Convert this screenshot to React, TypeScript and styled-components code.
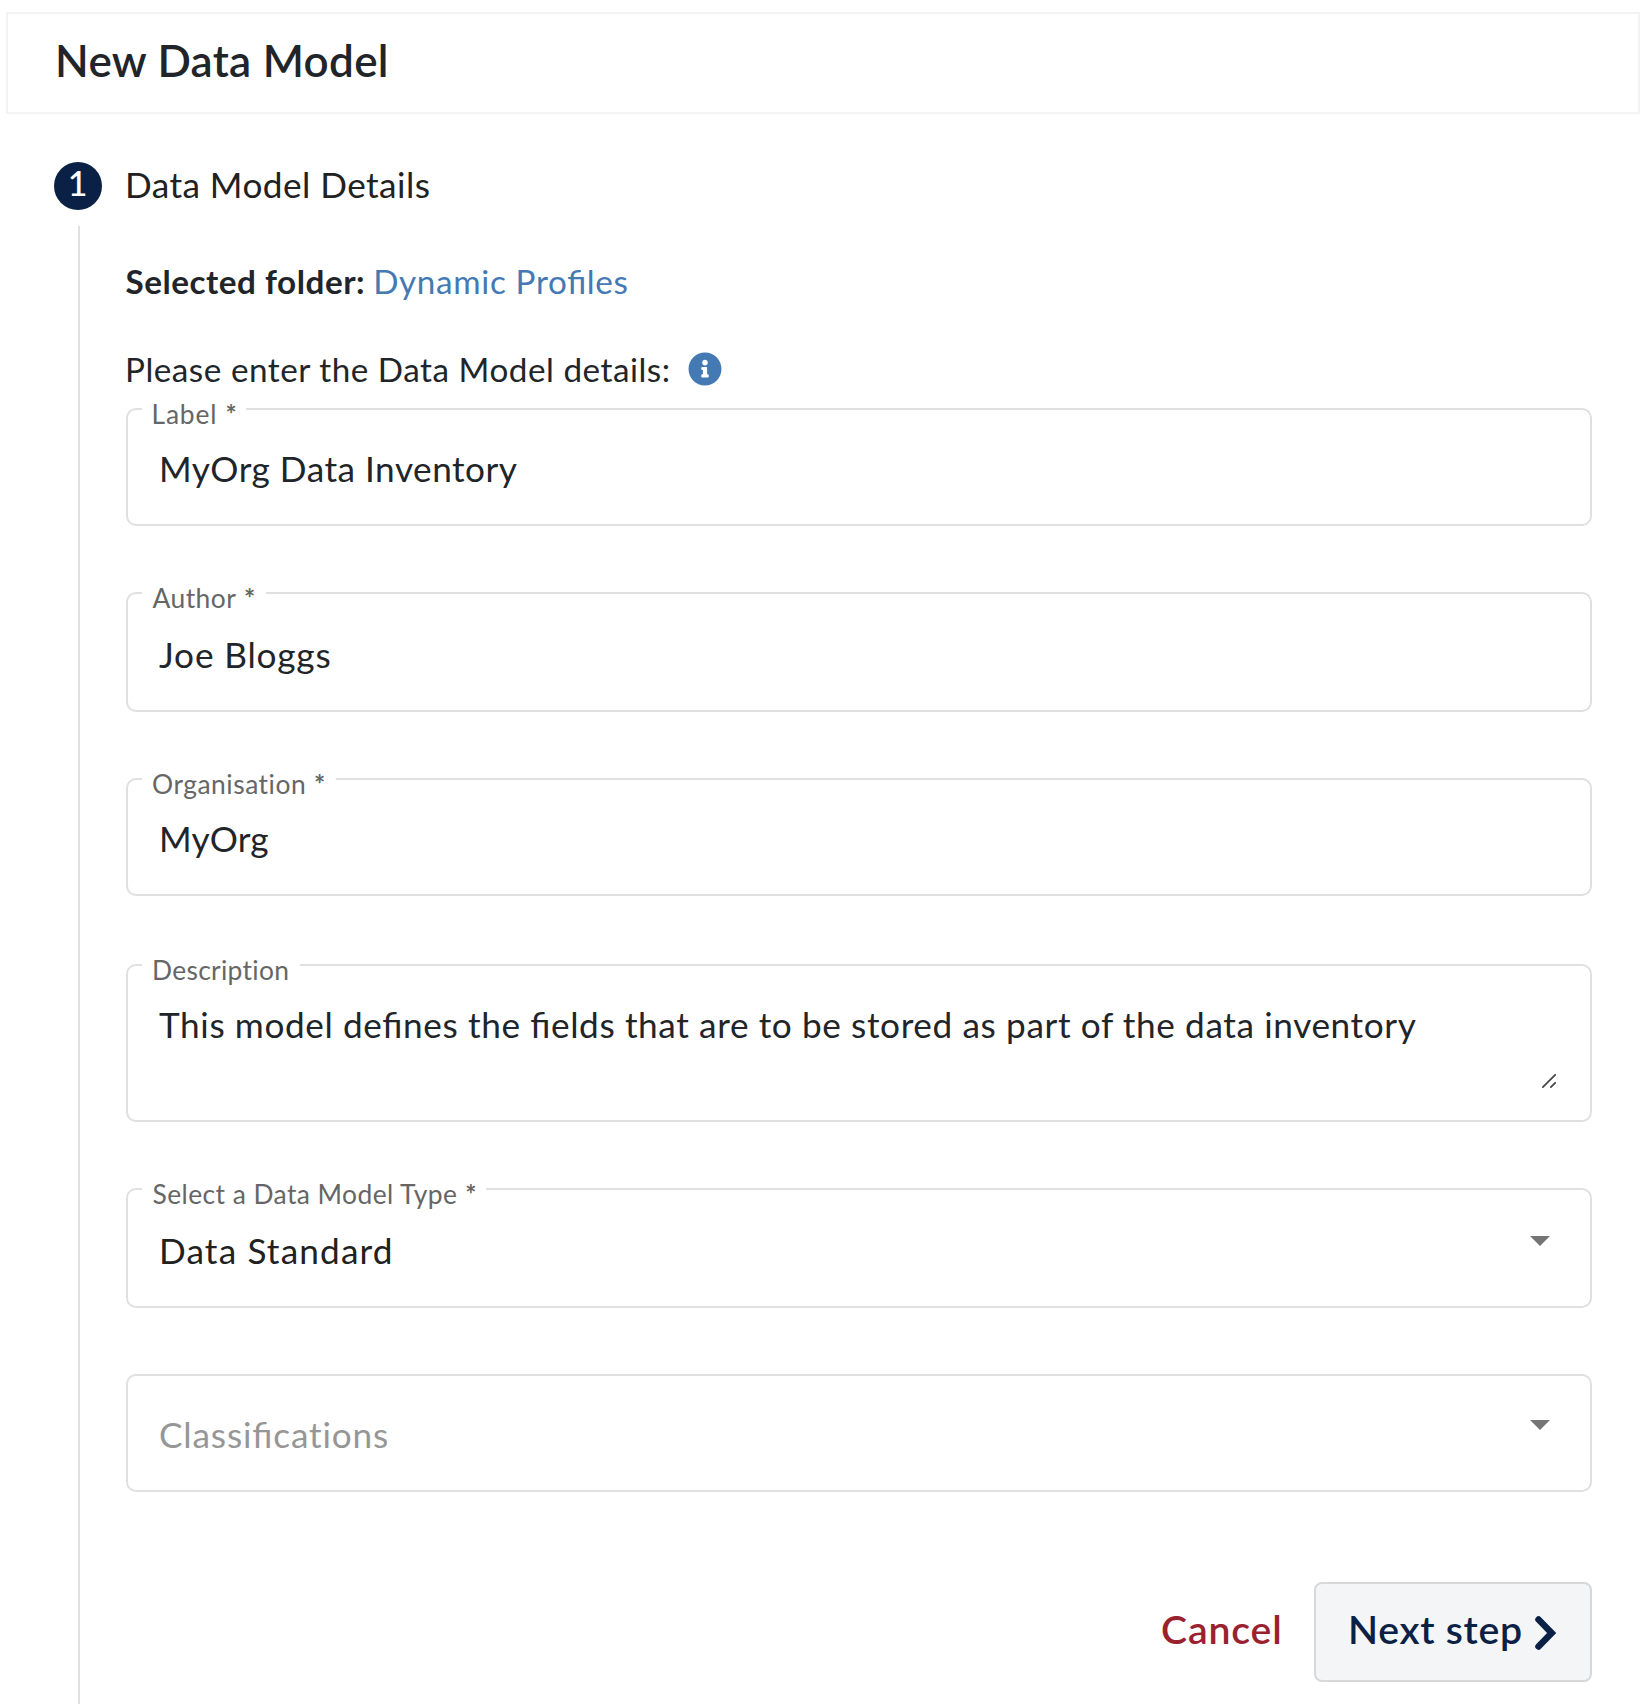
import React from "react";
import styled, { createGlobalStyle } from "styled-components";
import { FaInfoCircle } from "react-icons/fa";

const GlobalStyle = createGlobalStyle`
  * { box-sizing: border-box; }
  body {
    margin: 0;
    background: #fff;
    color: #212529;
    font-family: Lato, "Open Sans", sans-serif;
    font-feature-settings: "liga" 1;
  }
`;

const Page = styled.main`
  display: flex;
  flex-direction: column;
  height: 1704px;
  padding: 12px 8px 0 6px;
  overflow: hidden;
`;

const Header = styled.header`
  height: 102px;
  padding: 19px 0 0 47px;
  border: 2px solid #f3f3f3;
`;

const Title = styled.h1`
  margin: 0;
  font-size: 44px;
  font-weight: 600;
  line-height: 54px;
  letter-spacing: 0.3px;
`;

const StepHeader = styled.div`
  display: flex;
  gap: 23px;
  margin: 48px 0 0 48px;
  color: #212121;
`;

const StepNumber = styled.span`
  width: 48px;
  height: 48px;
  padding-right: 1px;
  border-radius: 50%;
  background: #0a2145;
  color: #fff;
  font-size: 34px;
  font-weight: 500;
  line-height: 41px;
  text-align: center;
`;

const StepTitle = styled.h2`
  margin: 0;
  font-size: 35.2px;
  font-weight: 400;
  line-height: 45px;
  letter-spacing: 0.44px;
`;

const StepBody = styled.section`
  flex: 1;
  margin: 16px 48px 0 72px;
  padding: 35px 0 0 46px;
  border-left: 2px solid #e0e0e0;
`;

const Line = styled.p<{ $gap: number; $top?: number }>`
  display: flex;
  gap: ${(p) => p.$gap}px;
  margin: ${(p) => p.$top ?? 0}px 0 0;
  font-size: 33.25px;
  line-height: 40px;
  letter-spacing: 0.52px;
`;

const Strong = styled.strong`
  margin-left: -0.5px;
  font-weight: 700;
`;

const FolderLink = styled.a`
  color: #4479b3;
  letter-spacing: 0.66px;
`;

const Prompt = styled.span`
  margin-left: -1px;
`;

const InfoIcon = styled(FaInfoCircle)`
  width: 34px;
  height: 34px;
  margin-top: 3px;
  color: #4479b3;
`;

const Form = styled.form`
  display: flex;
  flex-direction: column;
  gap: 66px;
  margin-top: 19px;
`;

const FieldBox = styled.div<{ $height: number; $pad: number; $extra?: number }>`
  position: relative;
  display: flex;
  justify-content: space-between;
  height: ${(p) => p.$height}px;
  margin-top: ${(p) => p.$extra ?? 0}px;
  padding: ${(p) => p.$pad}px 0 0 31px;
  border: 2px solid #e0e0e0;
  border-radius: 10px;
`;

const Label = styled.label<{ $width: number; $spacing: number; $inset: number }>`
  position: absolute;
  top: -12.5px;
  left: 14px;
  width: ${(p) => p.$width}px;
  padding-left: ${(p) => p.$inset}px;
  background: #fff;
  color: #666;
  font-size: 26.4px;
  line-height: 32px;
  letter-spacing: ${(p) => p.$spacing}px;
  font-feature-settings: "liga" 0;
  white-space: nowrap;
`;

const Required = styled.span`
  margin-left: 1px;
  font-weight: 700;
`;

const Value = styled.span<{ $spacing: number; $tone?: string }>`
  color: ${(p) => p.$tone ?? "#212529"};
  font-size: 35.2px;
  line-height: 46px;
  letter-spacing: ${(p) => p.$spacing}px;
  white-space: nowrap;
`;

const Unjoined = styled.span`
  font-feature-settings: "liga" 0;
`;

const Caret = styled.span`
  width: 20px;
  height: 10px;
  margin: 9px 40px 0 0;
  background: #757575;
  clip-path: polygon(0 0, 100% 0, 50% 100%);
`;

const ResizeGrip = styled.svg`
  align-self: flex-end;
  width: 14px;
  height: 14px;
  margin: 0 34px 32px 0;
`;

const Actions = styled.div`
  display: flex;
  justify-content: flex-end;
  margin-top: 24px;
`;

const Button = styled.button<{ $primary?: boolean }>`
  display: flex;
  width: ${(p) => (p.$primary ? "278px" : "153px")};
  height: 100px;
  padding: ${(p) => (p.$primary ? "22px 0 0 32px" : "24px 0 0 0")};
  border: ${(p) => (p.$primary ? "2px solid #d6d8da" : "none")};
  border-radius: 8px;
  background: ${(p) => (p.$primary ? "#f4f5f7" : "transparent")};
  color: ${(p) => (p.$primary ? "#0a2145" : "#9a222f")};
  font: 600 39.2px Lato, "Open Sans", sans-serif;
  line-height: 46px;
  letter-spacing: ${(p) => (p.$primary ? "0.72px" : "0.85px")};
`;

const Chevron = styled.svg`
  width: 21px;
  height: 34px;
  margin: 10px 0 0 12px;
`;

type Field = {
  label?: string;
  required?: boolean;
  width?: number;
  labelSpacing?: number;
  inset?: number;
  value: React.ReactNode;
  spacing: number;
  height: number;
  pad: number;
  kind?: "area" | "select";
  tone?: string;
};

const fields: Field[] = [
  { label: "Label", required: true, width: 104, labelSpacing: 0.85, inset: 9.5, value: "MyOrg Data Inventory", spacing: 0.5, height: 118, pad: 35 },
  { label: "Author", required: true, width: 124, labelSpacing: 0.45, inset: 10.5, value: "Joe Bloggs", spacing: 0.85, height: 120, pad: 37 },
  { label: "Organisation", required: true, width: 194, labelSpacing: 0.52, inset: 10, value: "MyOrg", spacing: 0.2, height: 118, pad: 35 },
  { label: "Description", width: 158, labelSpacing: 0.3, inset: 10, value: "This model defines the fields that are to be stored as part of the data inventory", spacing: 0.61, height: 158, pad: 35, kind: "area" },
  { label: "Select a Data Model Type", required: true, width: 344, labelSpacing: 0.43, inset: 10.5, value: "Data Standard", spacing: 1.15, height: 120, pad: 37, kind: "select", tone: "#212121" },
  { value: <>Classifi<Unjoined>cations</Unjoined></>, spacing: 0.84, height: 118, pad: 35, kind: "select", tone: "#969696" },
];

export default function App() {
  return (
    <Page>
      <GlobalStyle />
      <Header>
        <Title>New Data Model</Title>
      </Header>
      <StepHeader>
        <StepNumber>1</StepNumber>
        <StepTitle>Data Model Details</StepTitle>
      </StepHeader>
      <StepBody>
        <Line $gap={8}>
          <Strong>Selected folder:</Strong>
          <FolderLink>Dynamic Profiles</FolderLink>
        </Line>
        <Line $gap={17} $top={48}>
          <Prompt>Please enter the Data Model details:</Prompt>
          <InfoIcon />
        </Line>
        <Form>
          {fields.map((f, i) => (
            <FieldBox key={i} $height={f.height} $pad={f.pad} $extra={f.kind === "area" ? 2 : 0}>
              {f.label && (
                <Label $width={f.width!} $spacing={f.labelSpacing!} $inset={f.inset!}>
                  {f.label}
                  {f.required && <Required> *</Required>}
                </Label>
              )}
              <Value $spacing={f.spacing} $tone={f.tone}>
                <span>{f.value}</span>
              </Value>
              {f.kind === "select" && <Caret />}
              {f.kind === "area" && (
                <ResizeGrip viewBox="0 0 14 14" fill="none" stroke="#444" strokeWidth="1.7">
                  <path d="M0.3 13.7 13.7 0.3M8.3 13.7 13.7 8.3" />
                </ResizeGrip>
              )}
            </FieldBox>
          ))}
          <Actions>
            <Button type="button">Cancel</Button>
            <Button type="button" $primary>
              Next step
              <Chevron viewBox="0 0 21 34" fill="none" stroke="currentColor" strokeWidth="6.5" strokeLinecap="round">
                <path d="M3.5 3.5 16.6 17 3.5 30.5" />
              </Chevron>
            </Button>
          </Actions>
        </Form>
      </StepBody>
    </Page>
  );
}
